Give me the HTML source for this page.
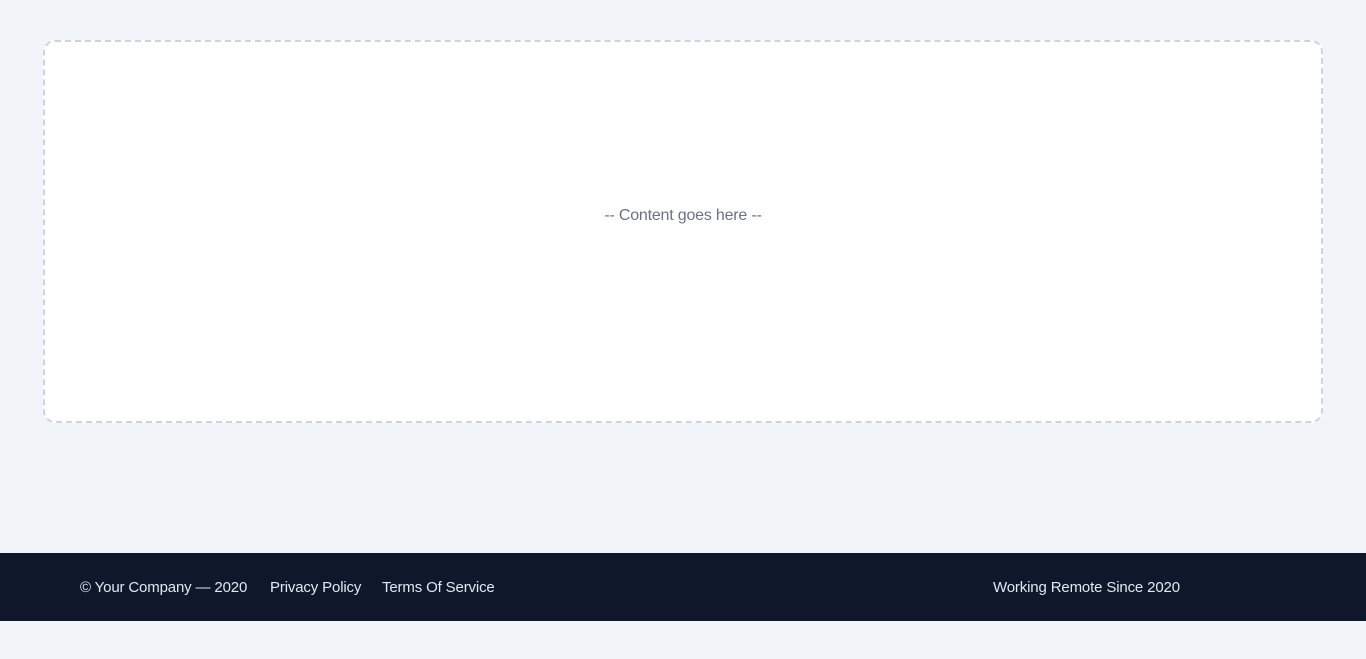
<!DOCTYPE html>
<html><head><style>
html,body{margin:0;padding:0;background:#f1f5f9;width:1366px;height:659px;overflow:hidden;font-family:"Liberation Sans",sans-serif}
.box{position:absolute;left:43px;top:40px;width:1276px;height:379px;border:2px dashed #cbd5e1;border-radius:12px;background:#fff}
.box span{position:absolute;left:0;right:0;top:165px;text-align:center;color:#64748b;font-size:16px;letter-spacing:-0.2px}
.foot{position:absolute;left:0;top:553px;width:1366px;height:68px;background:#0f172a;color:#e2e8f0;font-size:15px;letter-spacing:-0.15px}
.foot span{position:absolute;top:26px}
</style></head><body>
<div class="box"><span>-- Content goes here --</span></div>
<div class="foot">
<span style="left:80px">© Your Company — 2020</span>
<span style="left:270px">Privacy Policy</span>
<span style="left:382px">Terms Of Service</span>
<span style="left:993px">Working Remote Since 2020</span>
</div>
</body></html>
